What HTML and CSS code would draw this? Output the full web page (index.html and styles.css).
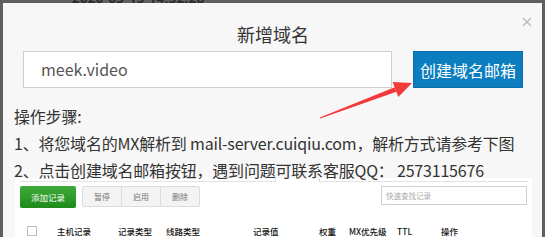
FILE: index.html
```html
<!DOCTYPE html>
<html lang="zh-CN">
<head>
<meta charset="utf-8">
<title>新增域名</title>
<link rel="stylesheet" href="styles.css">
</head>
<body>
<div class="page">
  <div class="backdrop-strip"><span class="backdrop-text">2020-05-15 14:32:28</span></div>
  <div class="modal">
    <button class="close" aria-label="关闭">
      <svg width="10" height="10" viewBox="0 0 10 10"><path d="M1 1L9 9M9 1L1 9" stroke="#bdbdbd" stroke-width="1.5" fill="none"/></svg>
    </button>
    <div class="head">
      <h1 class="title">新增域名</h1>
      <div class="form-row">
        <div class="domain-input">meek.video</div>
        <button class="create-btn">创建域名邮箱</button>
      </div>
    </div>
    <svg class="arrow" width="115" height="45" viewBox="0 0 115 45">
      <polygon points="16.8,39.5 91.6,9.2 93.4,13.8 17.2,40.5" fill="#f4393a"/>
      <polygon points="109,5 89.7,4 95.3,19" fill="#f4393a"/>
    </svg>
    <div class="steps">
      <p>操作步骤:</p>
      <p>1、将您域名的MX解析到 mail-server.cuiqiu.com，解析方式请参考下图</p>
      <p>2、点击创建域名邮箱按钮，遇到问题可联系客服QQ： 2573115676</p>
    </div>
    <div class="shot">
      <div class="shot-top"><span class="seg seg-a"></span><span class="seg seg-b"></span></div>
      <div class="toolbar">
        <span class="btn-add">添加记录</span>
        <div class="btn-group">
          <span class="btn-gray">暂停</span>
          <span class="btn-gray">启用</span>
          <span class="btn-gray">删除</span>
        </div>
        <span class="search">快速查找记录</span>
      </div>
      <div class="thead">
        <span class="check"></span>
        <span>主机记录</span>
        <span>记录类型</span>
        <span>线路类型</span>
        <span>记录值</span>
        <span>权重</span>
        <span>MX优先级</span>
        <span>TTL</span>
        <span>操作</span>
      </div>
    </div>
  </div>
</div>
</body>
</html>
```

FILE: styles.css
```css
html, body {
  margin: 0;
  padding: 0;
}
body {
  background: #5f5f5f;
  width: 545px;
  height: 237px;
  overflow: hidden;
  font-family: "Noto Sans CJK SC", "Noto Sans", sans-serif;
}
.page {
  padding: 0 3px;
}
.backdrop-strip {
  height: 3px;
  overflow: hidden;
  padding-left: 69px;
}
.backdrop-text {
  display: block;
  margin-top: -9px;
  font-family: "Noto Sans", sans-serif;
  font-size: 13px;
  line-height: 14px;
  font-weight: bold;
  color: #2a2a2a;
  letter-spacing: 0.5px;
}
.modal {
  position: relative;
  background: #f7f7f7;
  height: 234px;
  padding: 19px 10px 0 11px;
  box-sizing: border-box;
  overflow: hidden;
}
.close {
  position: absolute;
  top: 14px;
  right: 10px;
  width: 10px;
  height: 10px;
  padding: 0;
  border: 0;
  background: none;
  display: block;
}
.close svg {
  display: block;
}
.head {
  padding: 0 9px;
}
.title {
  margin: 0;
  font-size: 18px;
  line-height: 24px;
  font-weight: normal;
  color: #333;
  text-align: center;
}
.form-row {
  display: flex;
  margin-top: 5px;
  height: 37px;
  gap: 21px;
}
.domain-input {
  flex: 1;
  background: #fff;
  border: 1px solid #cfcfcf;
  padding-left: 17px;
  font-size: 16px;
  line-height: 35px;
  color: #555;
}
.create-btn {
  width: 110px;
  height: 37px;
  margin: 0;
  padding: 0;
  border: 1px solid #0a6ea8;
  background: #0c7ec0;
  color: #fff;
  font-family: inherit;
  font-size: 16px;
}
.arrow {
  position: absolute;
  left: 300px;
  top: 75px;
}
.steps {
  margin-top: 15px;
  font-size: 16px;
  line-height: 27px;
  color: #333;
  letter-spacing: -0.2px;
}
.steps p {
  margin: 0;
  white-space: nowrap;
}
.shot {
  margin: -6px 0 0 1px;
  background: #fff;
  height: 70px;
  padding: 0 4px 0 5px;
}
.shot-top {
  display: flex;
  justify-content: space-between;
}
.seg {
  display: block;
  height: 3px;
  border-bottom: 1px solid #e3e3e3;
}
.seg-a {
  width: 255px;
  border-right: 1px solid #d6d6d6;
}
.seg-b {
  width: 208px;
  border-left: 1px solid #d6d6d6;
}
.toolbar {
  display: flex;
  align-items: flex-start;
  margin-top: 4px;
}
.btn-add {
  width: 56px;
  height: 22px;
  line-height: 22px;
  text-align: center;
  background: linear-gradient(#40ab3b, #1d8a1b);
  border-radius: 2px;
  color: #fff;
  font-size: 8.5px;
}
.btn-group {
  display: flex;
  margin-left: 6px;
  border: 1px solid #dcdcdc;
  border-radius: 2px;
  background: #f3f3f3;
}
.btn-gray {
  width: 38px;
  height: 19px;
  line-height: 19px;
  text-align: center;
  font-size: 8px;
  color: #777;
}
.btn-gray + .btn-gray {
  border-left: 1px solid #dcdcdc;
}
.search {
  margin-left: auto;
  margin-right: 1px;
  width: 140px;
  height: 17px;
  line-height: 17px;
  padding-left: 4px;
  border: 1px solid #d0d0d0;
  background: #fff;
  font-size: 7.5px;
  color: #aaa;
}
.thead {
  display: grid;
  grid-template-columns: 30px 61px 48px 87px 66px 30px 48px 44px 1fr;
  align-items: center;
  margin-top: 17px;
  padding-left: 7px;
  font-size: 8.5px;
  line-height: 12px;
  font-weight: 500;
  color: #111;
}
.check {
  width: 8px;
  height: 8px;
  border: 1px solid #bbb;
  background: #fff;
}
```
